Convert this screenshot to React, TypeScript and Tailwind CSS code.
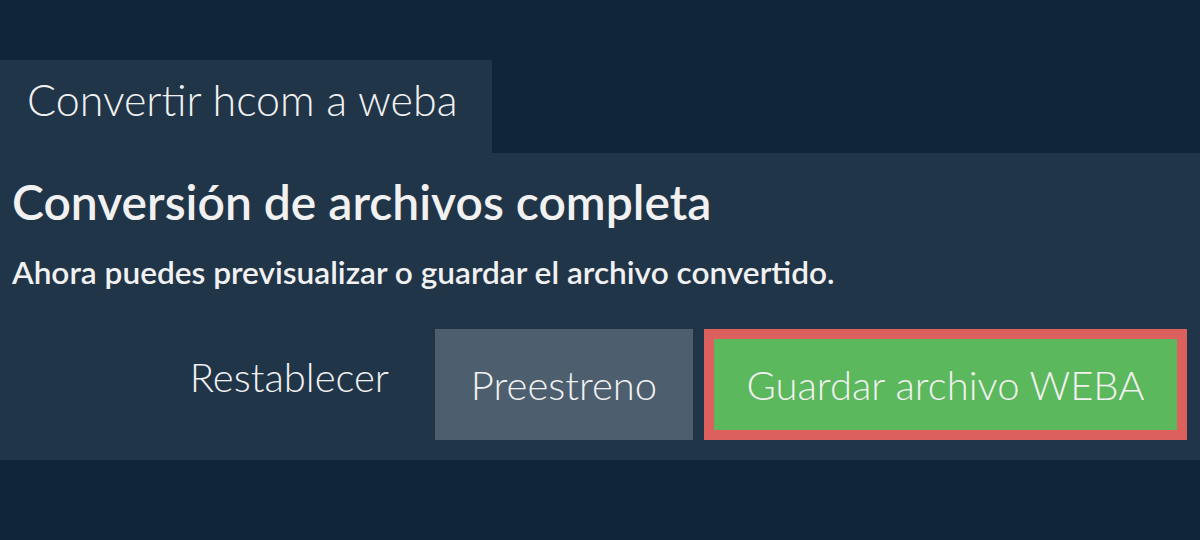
import React from "react";

function App() {
    return (
        <div className="h-[540px] w-[1200px] bg-[#10243a] pt-[60px] font-['Lato',sans-serif] text-[#f1f1f1]">
            <div className="flex">
                <div className="h-[93px] w-[492px] bg-[#213549] pl-[27px] pt-[12px] text-[43px] font-light leading-[56px]">
                    Convertir hcom a weba
                </div>
            </div>

            <div className="h-[307px] bg-[#213549] px-[12px] pt-[21px]">
                <h1 className="text-[48px] font-semibold leading-[56px]">
                    Conversión de archivos completa
                </h1>
                <p className="mt-[24px] text-[31.6px] font-semibold leading-[36px]">
                    Ahora puedes previsualizar o guardar el archivo convertido.
                </p>

                <div className="mt-[39px] flex items-stretch justify-end pr-[1px]">
                    <button type="button" className="mb-[16px] px-[46px] text-[40px] font-light">
                        Restablecer
                    </button>
                    <button type="button" className="h-[111px] w-[258px] bg-[#4d5e6f] text-[40px] font-light">
                        Preestreno
                    </button>
                    <button
                        type="button"
                        className="ml-[11px] h-[111px] w-[483px] border-[10px] border-[#dc605e] bg-[#5cb85c] text-[40px] font-light"
                    >
                        Guardar archivo WEBA
                    </button>
                </div>
            </div>
        </div>
    );
}

export default App;
